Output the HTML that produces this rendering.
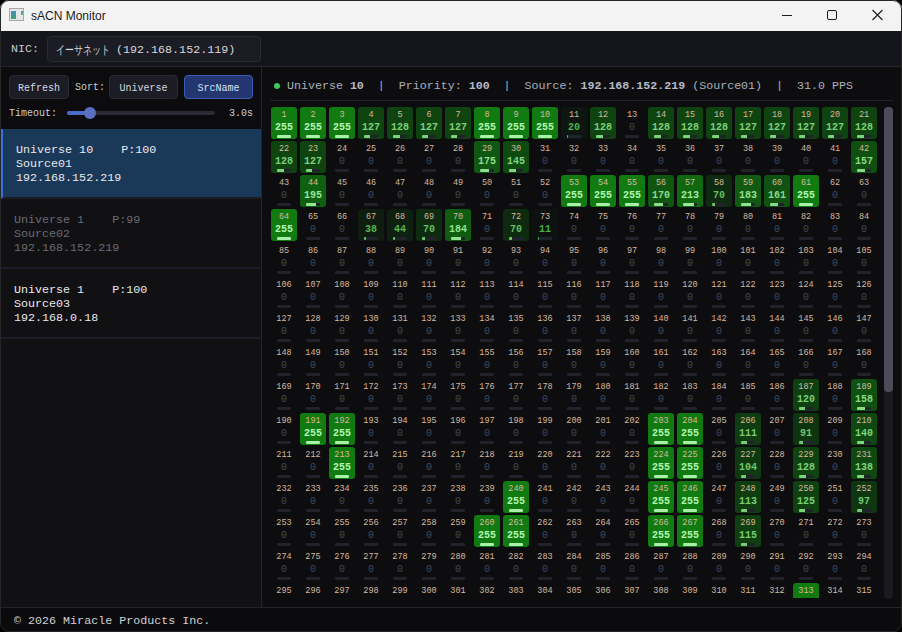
<!DOCTYPE html>
<html><head><meta charset="utf-8">
<style>
*{margin:0;padding:0;box-sizing:border-box}
html,body{width:902px;height:632px;overflow:hidden;background:#000}
body{font-family:"Liberation Mono",monospace;position:relative}
.win{position:absolute;left:0;top:0;width:902px;height:632px;border-radius:9px;overflow:hidden;background:#0d0d10}
.frame{position:absolute;left:0;top:0;width:902px;height:632px;border-radius:9px;border:1px solid #262626;pointer-events:none}
.title{position:absolute;left:0;top:0;width:902px;height:31px;background:#f3f3f3}
.title .t{position:absolute;left:31px;top:9px;font-family:"Liberation Sans",sans-serif;font-size:12px;color:#1a1a1a}
.ico{position:absolute;left:9px;top:8px;width:15px;height:13px;border:1px solid #a8a8a8;background:#e6e6e6}
.ico:before{content:"";position:absolute;left:1px;top:2px;width:5px;height:8px;background:linear-gradient(#4a8ac8,#3aa860)}
.ico:after{content:"";position:absolute;left:11px;top:2px;width:2px;height:4px;background:linear-gradient(#4a8ac8,#5ac070)}
.ctl{position:absolute;left:0;top:0}
.nic{position:absolute;left:0;top:31px;width:902px;height:35px;background:#15151c}
.nicb{position:absolute;left:0;top:66px;width:902px;height:1px;background:#25252e}
.nic .l{position:absolute;left:11px;top:11px;font-size:11.7px;color:#c8ccd8}
.nic .box{position:absolute;left:47px;top:5px;width:214px;height:26px;background:#1c1c24;border:1px solid #2a2a34;border-radius:4px;font-size:11.7px;color:#d8d8dc;white-space:nowrap}
.nic .box span{position:absolute;top:6px}
.jp{font-size:12px;transform:scaleX(0.75);transform-origin:0 0}
.left{position:absolute;left:1px;top:67px;width:261px;height:540px;background:#0c0c0f;border-right:1px solid #24242c}
.list{position:absolute;left:1px;top:129px;width:260px;height:478px;background:#111114}
.btn{position:absolute;height:24px;background:#1c1c24;border:1px solid #2a2a34;border-radius:4px;font-size:10px;color:#d8d8e0;text-align:center;line-height:25px}
.btn.on{background:#23366f;border-color:#3a5cb8;color:#d8e0f8}
.lbl{position:absolute;font-size:10px;color:#c8ccd4}
.track{position:absolute;left:67px;top:111px;width:148px;height:4px;border-radius:2px;background:#2a2a34}
.fill{position:absolute;left:67px;top:111px;width:24px;height:4px;border-radius:2px;background:#4a6cc8}
.thumb{position:absolute;left:84px;top:107px;width:12px;height:12px;border-radius:6px;background:#5a70c0}
.item{position:absolute;left:1px;width:260px;height:70px;border-bottom:2px solid #1c1c26;font-size:11.7px;line-height:14px;padding:14px 0 0 13px;color:#e8e8ea;white-space:pre}
.item.sel{background:#1a3858;border-left:2px solid #3a70e0;padding-left:13px}
.item.dim{color:#6a6a72}
.hdr{position:absolute;left:287px;top:79px;font-size:11.65px;color:#aab0bc;white-space:pre}
.hdr b{color:#b4bac6;font-weight:bold}
.dot{position:absolute;left:274px;top:83px;width:6px;height:6px;border-radius:3px;background:#3ccc5c}
.hline{position:absolute;left:270px;top:100px;width:623px;height:1px;background:#22222a}
.gridwrap{position:absolute;left:262px;top:101px;width:620px;height:497px;overflow:hidden}
.c{position:absolute;width:26px;height:32px;border-radius:3px;text-align:center}
.c i{position:absolute;left:0;top:3px;width:26px;font-style:normal;font-size:8.5px;line-height:10px;color:#d6b89c}
.c b{position:absolute;left:0;top:15px;width:26px;font-size:10px;line-height:12px;font-weight:bold;color:#c0f0c0}
.c b.z{font-weight:normal;color:#434859}
.c s{position:absolute;left:6px;top:28px;width:14px;height:3px;border-radius:1px;background:#22222c;overflow:hidden}
.c u{position:absolute;left:0;top:0;height:3px}
.sb{position:absolute;left:884px;top:107px;width:9px;height:492px;background:#1a1a20;border-radius:4px}
.sbt{position:absolute;left:884px;top:107px;width:9px;height:285px;background:#4c4c58;border-radius:4px}
.status{position:absolute;left:1px;top:607px;width:900px;height:25px;border-top:1px solid #24242c;background:#0b0b0d;font-size:11.7px;color:#d0d0d4;padding:6px 0 0 13px}
</style></head><body>
<div class="win">
 <div class="title">
  <div class="ico"></div>
  <div class="t">sACN Monitor</div>
  <svg class="ctl" width="902" height="31">
   <line x1="782" y1="15.5" x2="792" y2="15.5" stroke="#1a1a1a" stroke-width="1"/>
   <rect x="827.5" y="10.5" width="9" height="9" rx="1.5" fill="none" stroke="#1a1a1a" stroke-width="1"/>
   <path d="M872.5 10 L882.5 20 M882.5 10 L872.5 20" stroke="#1a1a1a" stroke-width="1.1"/>
  </svg>
 </div>
 <div class="nic"><div class="l">NIC:</div><div class="box"><span class="jp" style="left:8px;top:5px">イーサネット</span><span style="left:68px">(192.168.152.119)</span></div></div>
 <div class="nicb"></div>
 <div class="left"></div>
 <div class="list"></div>
 <div class="btn" style="left:9px;top:75px;width:60px">Refresh</div>
 <div class="lbl" style="left:75px;top:82px">Sort:</div>
 <div class="btn" style="left:109px;top:75px;width:69px">Universe</div>
 <div class="btn on" style="left:184px;top:75px;width:69px">SrcName</div>
 <div class="lbl" style="left:9px;top:108px">Timeout:</div>
 <div class="track"></div><div class="fill"></div><div class="thumb"></div>
 <div class="lbl" style="left:229px;top:108px">3.0s</div>
 <div class="item sel" style="top:129px">Universe 10    P:100
Source01
192.168.152.219</div>
 <div class="item dim" style="top:199px">Universe 1    P:99
Source02
192.168.152.219</div>
 <div class="item" style="top:269px">Universe 1    P:100
Source03
192.168.0.18</div>
 <div class="dot"></div>
 <div class="hdr">Universe <b>10</b>  |  Priority: <b>100</b>  |  Source: <b>192.168.152.219</b> (Source01)  |  31.0 PPS</div>
 <div class="hline"></div>
 <div class="gridwrap">
<div class="c" style="left:9px;top:6px;background:#117a11"><i>1</i><b style="color:#b2f6b2">255</b><s><u style="width:14px;background:#aaf0aa"></u></s></div>
<div class="c" style="left:38px;top:6px;background:#117a11"><i>2</i><b style="color:#b2f6b2">255</b><s><u style="width:14px;background:#aaf0aa"></u></s></div>
<div class="c" style="left:67px;top:6px;background:#117a11"><i>3</i><b style="color:#b2f6b2">255</b><s><u style="width:14px;background:#aaf0aa"></u></s></div>
<div class="c" style="left:96px;top:6px;background:#0f4310"><i>4</i><b style="color:#7cd07c">127</b><s><u style="width:6px;background:#7dd27d"></u></s></div>
<div class="c" style="left:125px;top:6px;background:#0f4411"><i>5</i><b style="color:#7cd07c">128</b><s><u style="width:7px;background:#7dd27d"></u></s></div>
<div class="c" style="left:154px;top:6px;background:#0f4310"><i>6</i><b style="color:#7cd07c">127</b><s><u style="width:6px;background:#7dd27d"></u></s></div>
<div class="c" style="left:183px;top:6px;background:#0f4310"><i>7</i><b style="color:#7cd07c">127</b><s><u style="width:6px;background:#7dd27d"></u></s></div>
<div class="c" style="left:212px;top:6px;background:#117a11"><i>8</i><b style="color:#b2f6b2">255</b><s><u style="width:14px;background:#aaf0aa"></u></s></div>
<div class="c" style="left:241px;top:6px;background:#117a11"><i>9</i><b style="color:#b2f6b2">255</b><s><u style="width:14px;background:#aaf0aa"></u></s></div>
<div class="c" style="left:270px;top:6px;background:#117a11"><i>10</i><b style="color:#b2f6b2">255</b><s><u style="width:14px;background:#aaf0aa"></u></s></div>
<div class="c" style="left:299px;top:6px;background:#0d1610"><i>11</i><b style="color:#4eb04e">20</b><s><u style="width:1px;background:#57b957"></u></s></div>
<div class="c" style="left:328px;top:6px;background:#0f4411"><i>12</i><b style="color:#7cd07c">128</b><s><u style="width:7px;background:#7dd27d"></u></s></div>
<div class="c" style="left:357px;top:6px"><i>13</i><b class="z">0</b><s></s></div>
<div class="c" style="left:386px;top:6px;background:#0f4411"><i>14</i><b style="color:#7cd07c">128</b><s><u style="width:7px;background:#7dd27d"></u></s></div>
<div class="c" style="left:415px;top:6px;background:#0f4411"><i>15</i><b style="color:#7cd07c">128</b><s><u style="width:7px;background:#7dd27d"></u></s></div>
<div class="c" style="left:444px;top:6px;background:#0f4411"><i>16</i><b style="color:#7cd07c">128</b><s><u style="width:7px;background:#7dd27d"></u></s></div>
<div class="c" style="left:473px;top:6px;background:#0f4310"><i>17</i><b style="color:#7cd07c">127</b><s><u style="width:6px;background:#7dd27d"></u></s></div>
<div class="c" style="left:502px;top:6px;background:#0f4310"><i>18</i><b style="color:#7cd07c">127</b><s><u style="width:6px;background:#7dd27d"></u></s></div>
<div class="c" style="left:531px;top:6px;background:#0f4310"><i>19</i><b style="color:#7cd07c">127</b><s><u style="width:6px;background:#7dd27d"></u></s></div>
<div class="c" style="left:560px;top:6px;background:#0f4310"><i>20</i><b style="color:#7cd07c">127</b><s><u style="width:6px;background:#7dd27d"></u></s></div>
<div class="c" style="left:589px;top:6px;background:#0f4411"><i>21</i><b style="color:#7cd07c">128</b><s><u style="width:7px;background:#7dd27d"></u></s></div>
<div class="c" style="left:9px;top:40px;background:#0f4411"><i>22</i><b style="color:#7cd07c">128</b><s><u style="width:7px;background:#7dd27d"></u></s></div>
<div class="c" style="left:38px;top:40px;background:#0f4310"><i>23</i><b style="color:#7cd07c">127</b><s><u style="width:6px;background:#7dd27d"></u></s></div>
<div class="c" style="left:67px;top:40px"><i>24</i><b class="z">0</b><s></s></div>
<div class="c" style="left:96px;top:40px"><i>25</i><b class="z">0</b><s></s></div>
<div class="c" style="left:125px;top:40px"><i>26</i><b class="z">0</b><s></s></div>
<div class="c" style="left:154px;top:40px"><i>27</i><b class="z">0</b><s></s></div>
<div class="c" style="left:183px;top:40px"><i>28</i><b class="z">0</b><s></s></div>
<div class="c" style="left:212px;top:40px;background:#105811"><i>29</i><b style="color:#90de90">175</b><s><u style="width:9px;background:#8edd8e"></u></s></div>
<div class="c" style="left:241px;top:40px;background:#0f4b11"><i>30</i><b style="color:#83d583">145</b><s><u style="width:7px;background:#83d683"></u></s></div>
<div class="c" style="left:270px;top:40px"><i>31</i><b class="z">0</b><s></s></div>
<div class="c" style="left:299px;top:40px"><i>32</i><b class="z">0</b><s></s></div>
<div class="c" style="left:328px;top:40px"><i>33</i><b class="z">0</b><s></s></div>
<div class="c" style="left:357px;top:40px"><i>34</i><b class="z">0</b><s></s></div>
<div class="c" style="left:386px;top:40px"><i>35</i><b class="z">0</b><s></s></div>
<div class="c" style="left:415px;top:40px"><i>36</i><b class="z">0</b><s></s></div>
<div class="c" style="left:444px;top:40px"><i>37</i><b class="z">0</b><s></s></div>
<div class="c" style="left:473px;top:40px"><i>38</i><b class="z">0</b><s></s></div>
<div class="c" style="left:502px;top:40px"><i>39</i><b class="z">0</b><s></s></div>
<div class="c" style="left:531px;top:40px"><i>40</i><b class="z">0</b><s></s></div>
<div class="c" style="left:560px;top:40px"><i>41</i><b class="z">0</b><s></s></div>
<div class="c" style="left:589px;top:40px;background:#0f5011"><i>42</i><b style="color:#88d988">157</b><s><u style="width:8px;background:#87d987"></u></s></div>
<div class="c" style="left:9px;top:74px"><i>43</i><b class="z">0</b><s></s></div>
<div class="c" style="left:38px;top:74px;background:#106011"><i>44</i><b style="color:#99e499">195</b><s><u style="width:10px;background:#95e295"></u></s></div>
<div class="c" style="left:67px;top:74px"><i>45</i><b class="z">0</b><s></s></div>
<div class="c" style="left:96px;top:74px"><i>46</i><b class="z">0</b><s></s></div>
<div class="c" style="left:125px;top:74px"><i>47</i><b class="z">0</b><s></s></div>
<div class="c" style="left:154px;top:74px"><i>48</i><b class="z">0</b><s></s></div>
<div class="c" style="left:183px;top:74px"><i>49</i><b class="z">0</b><s></s></div>
<div class="c" style="left:212px;top:74px"><i>50</i><b class="z">0</b><s></s></div>
<div class="c" style="left:241px;top:74px"><i>51</i><b class="z">0</b><s></s></div>
<div class="c" style="left:270px;top:74px"><i>52</i><b class="z">0</b><s></s></div>
<div class="c" style="left:299px;top:74px;background:#117a11"><i>53</i><b style="color:#b2f6b2">255</b><s><u style="width:14px;background:#aaf0aa"></u></s></div>
<div class="c" style="left:328px;top:74px;background:#117a11"><i>54</i><b style="color:#b2f6b2">255</b><s><u style="width:14px;background:#aaf0aa"></u></s></div>
<div class="c" style="left:357px;top:74px;background:#117a11"><i>55</i><b style="color:#b2f6b2">255</b><s><u style="width:14px;background:#aaf0aa"></u></s></div>
<div class="c" style="left:386px;top:74px;background:#105611"><i>56</i><b style="color:#8edd8e">170</b><s><u style="width:9px;background:#8cdc8c"></u></s></div>
<div class="c" style="left:415px;top:74px;background:#106811"><i>57</i><b style="color:#a0e9a0">213</b><s><u style="width:11px;background:#9be69b"></u></s></div>
<div class="c" style="left:444px;top:74px;background:#0e2b10"><i>58</i><b style="color:#64bf64">70</b><s><u style="width:3px;background:#69c469"></u></s></div>
<div class="c" style="left:473px;top:74px;background:#105b11"><i>59</i><b style="color:#94e194">183</b><s><u style="width:10px;background:#91df91"></u></s></div>
<div class="c" style="left:502px;top:74px;background:#105211"><i>60</i><b style="color:#8ada8a">161</b><s><u style="width:8px;background:#89da89"></u></s></div>
<div class="c" style="left:531px;top:74px;background:#117a11"><i>61</i><b style="color:#b2f6b2">255</b><s><u style="width:14px;background:#aaf0aa"></u></s></div>
<div class="c" style="left:560px;top:74px"><i>62</i><b class="z">0</b><s></s></div>
<div class="c" style="left:589px;top:74px"><i>63</i><b class="z">0</b><s></s></div>
<div class="c" style="left:9px;top:108px;background:#117a11"><i>64</i><b style="color:#b2f6b2">255</b><s><u style="width:14px;background:#aaf0aa"></u></s></div>
<div class="c" style="left:38px;top:108px"><i>65</i><b class="z">0</b><s></s></div>
<div class="c" style="left:67px;top:108px"><i>66</i><b class="z">0</b><s></s></div>
<div class="c" style="left:96px;top:108px;background:#0e1d10"><i>67</i><b style="color:#56b556">38</b><s><u style="width:2px;background:#5dbd5d"></u></s></div>
<div class="c" style="left:125px;top:108px;background:#0e2010"><i>68</i><b style="color:#59b759">44</b><s><u style="width:2px;background:#60be60"></u></s></div>
<div class="c" style="left:154px;top:108px;background:#0e2b10"><i>69</i><b style="color:#64bf64">70</b><s><u style="width:3px;background:#69c469"></u></s></div>
<div class="c" style="left:183px;top:108px;background:#105c11"><i>70</i><b style="color:#94e194">184</b><s><u style="width:10px;background:#91df91"></u></s></div>
<div class="c" style="left:212px;top:108px"><i>71</i><b class="z">0</b><s></s></div>
<div class="c" style="left:241px;top:108px;background:#0e2b10"><i>72</i><b style="color:#64bf64">70</b><s><u style="width:3px;background:#69c469"></u></s></div>
<div class="c" style="left:270px;top:108px;background:#0d1210"><i>73</i><b style="color:#4bad4b">11</b><s><u style="width:1px;background:#54b754"></u></s></div>
<div class="c" style="left:299px;top:108px"><i>74</i><b class="z">0</b><s></s></div>
<div class="c" style="left:328px;top:108px"><i>75</i><b class="z">0</b><s></s></div>
<div class="c" style="left:357px;top:108px"><i>76</i><b class="z">0</b><s></s></div>
<div class="c" style="left:386px;top:108px"><i>77</i><b class="z">0</b><s></s></div>
<div class="c" style="left:415px;top:108px"><i>78</i><b class="z">0</b><s></s></div>
<div class="c" style="left:444px;top:108px"><i>79</i><b class="z">0</b><s></s></div>
<div class="c" style="left:473px;top:108px"><i>80</i><b class="z">0</b><s></s></div>
<div class="c" style="left:502px;top:108px"><i>81</i><b class="z">0</b><s></s></div>
<div class="c" style="left:531px;top:108px"><i>82</i><b class="z">0</b><s></s></div>
<div class="c" style="left:560px;top:108px"><i>83</i><b class="z">0</b><s></s></div>
<div class="c" style="left:589px;top:108px"><i>84</i><b class="z">0</b><s></s></div>
<div class="c" style="left:9px;top:142px"><i>85</i><b class="z">0</b><s></s></div>
<div class="c" style="left:38px;top:142px"><i>86</i><b class="z">0</b><s></s></div>
<div class="c" style="left:67px;top:142px"><i>87</i><b class="z">0</b><s></s></div>
<div class="c" style="left:96px;top:142px"><i>88</i><b class="z">0</b><s></s></div>
<div class="c" style="left:125px;top:142px"><i>89</i><b class="z">0</b><s></s></div>
<div class="c" style="left:154px;top:142px"><i>90</i><b class="z">0</b><s></s></div>
<div class="c" style="left:183px;top:142px"><i>91</i><b class="z">0</b><s></s></div>
<div class="c" style="left:212px;top:142px"><i>92</i><b class="z">0</b><s></s></div>
<div class="c" style="left:241px;top:142px"><i>93</i><b class="z">0</b><s></s></div>
<div class="c" style="left:270px;top:142px"><i>94</i><b class="z">0</b><s></s></div>
<div class="c" style="left:299px;top:142px"><i>95</i><b class="z">0</b><s></s></div>
<div class="c" style="left:328px;top:142px"><i>96</i><b class="z">0</b><s></s></div>
<div class="c" style="left:357px;top:142px"><i>97</i><b class="z">0</b><s></s></div>
<div class="c" style="left:386px;top:142px"><i>98</i><b class="z">0</b><s></s></div>
<div class="c" style="left:415px;top:142px"><i>99</i><b class="z">0</b><s></s></div>
<div class="c" style="left:444px;top:142px"><i>100</i><b class="z">0</b><s></s></div>
<div class="c" style="left:473px;top:142px"><i>101</i><b class="z">0</b><s></s></div>
<div class="c" style="left:502px;top:142px"><i>102</i><b class="z">0</b><s></s></div>
<div class="c" style="left:531px;top:142px"><i>103</i><b class="z">0</b><s></s></div>
<div class="c" style="left:560px;top:142px"><i>104</i><b class="z">0</b><s></s></div>
<div class="c" style="left:589px;top:142px"><i>105</i><b class="z">0</b><s></s></div>
<div class="c" style="left:9px;top:176px"><i>106</i><b class="z">0</b><s></s></div>
<div class="c" style="left:38px;top:176px"><i>107</i><b class="z">0</b><s></s></div>
<div class="c" style="left:67px;top:176px"><i>108</i><b class="z">0</b><s></s></div>
<div class="c" style="left:96px;top:176px"><i>109</i><b class="z">0</b><s></s></div>
<div class="c" style="left:125px;top:176px"><i>110</i><b class="z">0</b><s></s></div>
<div class="c" style="left:154px;top:176px"><i>111</i><b class="z">0</b><s></s></div>
<div class="c" style="left:183px;top:176px"><i>112</i><b class="z">0</b><s></s></div>
<div class="c" style="left:212px;top:176px"><i>113</i><b class="z">0</b><s></s></div>
<div class="c" style="left:241px;top:176px"><i>114</i><b class="z">0</b><s></s></div>
<div class="c" style="left:270px;top:176px"><i>115</i><b class="z">0</b><s></s></div>
<div class="c" style="left:299px;top:176px"><i>116</i><b class="z">0</b><s></s></div>
<div class="c" style="left:328px;top:176px"><i>117</i><b class="z">0</b><s></s></div>
<div class="c" style="left:357px;top:176px"><i>118</i><b class="z">0</b><s></s></div>
<div class="c" style="left:386px;top:176px"><i>119</i><b class="z">0</b><s></s></div>
<div class="c" style="left:415px;top:176px"><i>120</i><b class="z">0</b><s></s></div>
<div class="c" style="left:444px;top:176px"><i>121</i><b class="z">0</b><s></s></div>
<div class="c" style="left:473px;top:176px"><i>122</i><b class="z">0</b><s></s></div>
<div class="c" style="left:502px;top:176px"><i>123</i><b class="z">0</b><s></s></div>
<div class="c" style="left:531px;top:176px"><i>124</i><b class="z">0</b><s></s></div>
<div class="c" style="left:560px;top:176px"><i>125</i><b class="z">0</b><s></s></div>
<div class="c" style="left:589px;top:176px"><i>126</i><b class="z">0</b><s></s></div>
<div class="c" style="left:9px;top:210px"><i>127</i><b class="z">0</b><s></s></div>
<div class="c" style="left:38px;top:210px"><i>128</i><b class="z">0</b><s></s></div>
<div class="c" style="left:67px;top:210px"><i>129</i><b class="z">0</b><s></s></div>
<div class="c" style="left:96px;top:210px"><i>130</i><b class="z">0</b><s></s></div>
<div class="c" style="left:125px;top:210px"><i>131</i><b class="z">0</b><s></s></div>
<div class="c" style="left:154px;top:210px"><i>132</i><b class="z">0</b><s></s></div>
<div class="c" style="left:183px;top:210px"><i>133</i><b class="z">0</b><s></s></div>
<div class="c" style="left:212px;top:210px"><i>134</i><b class="z">0</b><s></s></div>
<div class="c" style="left:241px;top:210px"><i>135</i><b class="z">0</b><s></s></div>
<div class="c" style="left:270px;top:210px"><i>136</i><b class="z">0</b><s></s></div>
<div class="c" style="left:299px;top:210px"><i>137</i><b class="z">0</b><s></s></div>
<div class="c" style="left:328px;top:210px"><i>138</i><b class="z">0</b><s></s></div>
<div class="c" style="left:357px;top:210px"><i>139</i><b class="z">0</b><s></s></div>
<div class="c" style="left:386px;top:210px"><i>140</i><b class="z">0</b><s></s></div>
<div class="c" style="left:415px;top:210px"><i>141</i><b class="z">0</b><s></s></div>
<div class="c" style="left:444px;top:210px"><i>142</i><b class="z">0</b><s></s></div>
<div class="c" style="left:473px;top:210px"><i>143</i><b class="z">0</b><s></s></div>
<div class="c" style="left:502px;top:210px"><i>144</i><b class="z">0</b><s></s></div>
<div class="c" style="left:531px;top:210px"><i>145</i><b class="z">0</b><s></s></div>
<div class="c" style="left:560px;top:210px"><i>146</i><b class="z">0</b><s></s></div>
<div class="c" style="left:589px;top:210px"><i>147</i><b class="z">0</b><s></s></div>
<div class="c" style="left:9px;top:244px"><i>148</i><b class="z">0</b><s></s></div>
<div class="c" style="left:38px;top:244px"><i>149</i><b class="z">0</b><s></s></div>
<div class="c" style="left:67px;top:244px"><i>150</i><b class="z">0</b><s></s></div>
<div class="c" style="left:96px;top:244px"><i>151</i><b class="z">0</b><s></s></div>
<div class="c" style="left:125px;top:244px"><i>152</i><b class="z">0</b><s></s></div>
<div class="c" style="left:154px;top:244px"><i>153</i><b class="z">0</b><s></s></div>
<div class="c" style="left:183px;top:244px"><i>154</i><b class="z">0</b><s></s></div>
<div class="c" style="left:212px;top:244px"><i>155</i><b class="z">0</b><s></s></div>
<div class="c" style="left:241px;top:244px"><i>156</i><b class="z">0</b><s></s></div>
<div class="c" style="left:270px;top:244px"><i>157</i><b class="z">0</b><s></s></div>
<div class="c" style="left:299px;top:244px"><i>158</i><b class="z">0</b><s></s></div>
<div class="c" style="left:328px;top:244px"><i>159</i><b class="z">0</b><s></s></div>
<div class="c" style="left:357px;top:244px"><i>160</i><b class="z">0</b><s></s></div>
<div class="c" style="left:386px;top:244px"><i>161</i><b class="z">0</b><s></s></div>
<div class="c" style="left:415px;top:244px"><i>162</i><b class="z">0</b><s></s></div>
<div class="c" style="left:444px;top:244px"><i>163</i><b class="z">0</b><s></s></div>
<div class="c" style="left:473px;top:244px"><i>164</i><b class="z">0</b><s></s></div>
<div class="c" style="left:502px;top:244px"><i>165</i><b class="z">0</b><s></s></div>
<div class="c" style="left:531px;top:244px"><i>166</i><b class="z">0</b><s></s></div>
<div class="c" style="left:560px;top:244px"><i>167</i><b class="z">0</b><s></s></div>
<div class="c" style="left:589px;top:244px"><i>168</i><b class="z">0</b><s></s></div>
<div class="c" style="left:9px;top:278px"><i>169</i><b class="z">0</b><s></s></div>
<div class="c" style="left:38px;top:278px"><i>170</i><b class="z">0</b><s></s></div>
<div class="c" style="left:67px;top:278px"><i>171</i><b class="z">0</b><s></s></div>
<div class="c" style="left:96px;top:278px"><i>172</i><b class="z">0</b><s></s></div>
<div class="c" style="left:125px;top:278px"><i>173</i><b class="z">0</b><s></s></div>
<div class="c" style="left:154px;top:278px"><i>174</i><b class="z">0</b><s></s></div>
<div class="c" style="left:183px;top:278px"><i>175</i><b class="z">0</b><s></s></div>
<div class="c" style="left:212px;top:278px"><i>176</i><b class="z">0</b><s></s></div>
<div class="c" style="left:241px;top:278px"><i>177</i><b class="z">0</b><s></s></div>
<div class="c" style="left:270px;top:278px"><i>178</i><b class="z">0</b><s></s></div>
<div class="c" style="left:299px;top:278px"><i>179</i><b class="z">0</b><s></s></div>
<div class="c" style="left:328px;top:278px"><i>180</i><b class="z">0</b><s></s></div>
<div class="c" style="left:357px;top:278px"><i>181</i><b class="z">0</b><s></s></div>
<div class="c" style="left:386px;top:278px"><i>182</i><b class="z">0</b><s></s></div>
<div class="c" style="left:415px;top:278px"><i>183</i><b class="z">0</b><s></s></div>
<div class="c" style="left:444px;top:278px"><i>184</i><b class="z">0</b><s></s></div>
<div class="c" style="left:473px;top:278px"><i>185</i><b class="z">0</b><s></s></div>
<div class="c" style="left:502px;top:278px"><i>186</i><b class="z">0</b><s></s></div>
<div class="c" style="left:531px;top:278px;background:#0f4010"><i>187</i><b style="color:#79ce79">120</b><s><u style="width:6px;background:#7ad07a"></u></s></div>
<div class="c" style="left:560px;top:278px"><i>188</i><b class="z">0</b><s></s></div>
<div class="c" style="left:589px;top:278px;background:#0f5111"><i>189</i><b style="color:#89d989">158</b><s><u style="width:8px;background:#88d988"></u></s></div>
<div class="c" style="left:9px;top:312px"><i>190</i><b class="z">0</b><s></s></div>
<div class="c" style="left:38px;top:312px;background:#117a11"><i>191</i><b style="color:#b2f6b2">255</b><s><u style="width:14px;background:#aaf0aa"></u></s></div>
<div class="c" style="left:67px;top:312px;background:#117a11"><i>192</i><b style="color:#b2f6b2">255</b><s><u style="width:14px;background:#aaf0aa"></u></s></div>
<div class="c" style="left:96px;top:312px"><i>193</i><b class="z">0</b><s></s></div>
<div class="c" style="left:125px;top:312px"><i>194</i><b class="z">0</b><s></s></div>
<div class="c" style="left:154px;top:312px"><i>195</i><b class="z">0</b><s></s></div>
<div class="c" style="left:183px;top:312px"><i>196</i><b class="z">0</b><s></s></div>
<div class="c" style="left:212px;top:312px"><i>197</i><b class="z">0</b><s></s></div>
<div class="c" style="left:241px;top:312px"><i>198</i><b class="z">0</b><s></s></div>
<div class="c" style="left:270px;top:312px"><i>199</i><b class="z">0</b><s></s></div>
<div class="c" style="left:299px;top:312px"><i>200</i><b class="z">0</b><s></s></div>
<div class="c" style="left:328px;top:312px"><i>201</i><b class="z">0</b><s></s></div>
<div class="c" style="left:357px;top:312px"><i>202</i><b class="z">0</b><s></s></div>
<div class="c" style="left:386px;top:312px;background:#117a11"><i>203</i><b style="color:#b2f6b2">255</b><s><u style="width:14px;background:#aaf0aa"></u></s></div>
<div class="c" style="left:415px;top:312px;background:#117a11"><i>204</i><b style="color:#b2f6b2">255</b><s><u style="width:14px;background:#aaf0aa"></u></s></div>
<div class="c" style="left:444px;top:312px"><i>205</i><b class="z">0</b><s></s></div>
<div class="c" style="left:473px;top:312px;background:#0f3c10"><i>206</i><b style="color:#75cb75">111</b><s><u style="width:6px;background:#77ce77"></u></s></div>
<div class="c" style="left:502px;top:312px"><i>207</i><b class="z">0</b><s></s></div>
<div class="c" style="left:531px;top:312px;background:#0e3410"><i>208</i><b style="color:#6dc56d">91</b><s><u style="width:4px;background:#70c970"></u></s></div>
<div class="c" style="left:560px;top:312px"><i>209</i><b class="z">0</b><s></s></div>
<div class="c" style="left:589px;top:312px;background:#0f4911"><i>210</i><b style="color:#81d481">140</b><s><u style="width:7px;background:#81d581"></u></s></div>
<div class="c" style="left:9px;top:346px"><i>211</i><b class="z">0</b><s></s></div>
<div class="c" style="left:38px;top:346px"><i>212</i><b class="z">0</b><s></s></div>
<div class="c" style="left:67px;top:346px;background:#117a11"><i>213</i><b style="color:#b2f6b2">255</b><s><u style="width:14px;background:#aaf0aa"></u></s></div>
<div class="c" style="left:96px;top:346px"><i>214</i><b class="z">0</b><s></s></div>
<div class="c" style="left:125px;top:346px"><i>215</i><b class="z">0</b><s></s></div>
<div class="c" style="left:154px;top:346px"><i>216</i><b class="z">0</b><s></s></div>
<div class="c" style="left:183px;top:346px"><i>217</i><b class="z">0</b><s></s></div>
<div class="c" style="left:212px;top:346px"><i>218</i><b class="z">0</b><s></s></div>
<div class="c" style="left:241px;top:346px"><i>219</i><b class="z">0</b><s></s></div>
<div class="c" style="left:270px;top:346px"><i>220</i><b class="z">0</b><s></s></div>
<div class="c" style="left:299px;top:346px"><i>221</i><b class="z">0</b><s></s></div>
<div class="c" style="left:328px;top:346px"><i>222</i><b class="z">0</b><s></s></div>
<div class="c" style="left:357px;top:346px"><i>223</i><b class="z">0</b><s></s></div>
<div class="c" style="left:386px;top:346px;background:#117a11"><i>224</i><b style="color:#b2f6b2">255</b><s><u style="width:14px;background:#aaf0aa"></u></s></div>
<div class="c" style="left:415px;top:346px;background:#117a11"><i>225</i><b style="color:#b2f6b2">255</b><s><u style="width:14px;background:#aaf0aa"></u></s></div>
<div class="c" style="left:444px;top:346px"><i>226</i><b class="z">0</b><s></s></div>
<div class="c" style="left:473px;top:346px;background:#0f3910"><i>227</i><b style="color:#72c972">104</b><s><u style="width:5px;background:#75cc75"></u></s></div>
<div class="c" style="left:502px;top:346px"><i>228</i><b class="z">0</b><s></s></div>
<div class="c" style="left:531px;top:346px;background:#0f4411"><i>229</i><b style="color:#7cd07c">128</b><s><u style="width:7px;background:#7dd27d"></u></s></div>
<div class="c" style="left:560px;top:346px"><i>230</i><b class="z">0</b><s></s></div>
<div class="c" style="left:589px;top:346px;background:#0f4811"><i>231</i><b style="color:#80d380">138</b><s><u style="width:7px;background:#81d481"></u></s></div>
<div class="c" style="left:9px;top:380px"><i>232</i><b class="z">0</b><s></s></div>
<div class="c" style="left:38px;top:380px"><i>233</i><b class="z">0</b><s></s></div>
<div class="c" style="left:67px;top:380px"><i>234</i><b class="z">0</b><s></s></div>
<div class="c" style="left:96px;top:380px"><i>235</i><b class="z">0</b><s></s></div>
<div class="c" style="left:125px;top:380px"><i>236</i><b class="z">0</b><s></s></div>
<div class="c" style="left:154px;top:380px"><i>237</i><b class="z">0</b><s></s></div>
<div class="c" style="left:183px;top:380px"><i>238</i><b class="z">0</b><s></s></div>
<div class="c" style="left:212px;top:380px"><i>239</i><b class="z">0</b><s></s></div>
<div class="c" style="left:241px;top:380px;background:#117a11"><i>240</i><b style="color:#b2f6b2">255</b><s><u style="width:14px;background:#aaf0aa"></u></s></div>
<div class="c" style="left:270px;top:380px"><i>241</i><b class="z">0</b><s></s></div>
<div class="c" style="left:299px;top:380px"><i>242</i><b class="z">0</b><s></s></div>
<div class="c" style="left:328px;top:380px"><i>243</i><b class="z">0</b><s></s></div>
<div class="c" style="left:357px;top:380px"><i>244</i><b class="z">0</b><s></s></div>
<div class="c" style="left:386px;top:380px;background:#117a11"><i>245</i><b style="color:#b2f6b2">255</b><s><u style="width:14px;background:#aaf0aa"></u></s></div>
<div class="c" style="left:415px;top:380px;background:#117a11"><i>246</i><b style="color:#b2f6b2">255</b><s><u style="width:14px;background:#aaf0aa"></u></s></div>
<div class="c" style="left:444px;top:380px"><i>247</i><b class="z">0</b><s></s></div>
<div class="c" style="left:473px;top:380px;background:#0f3d10"><i>248</i><b style="color:#76cc76">113</b><s><u style="width:6px;background:#78cf78"></u></s></div>
<div class="c" style="left:502px;top:380px"><i>249</i><b class="z">0</b><s></s></div>
<div class="c" style="left:531px;top:380px;background:#0f4210"><i>250</i><b style="color:#7bcf7b">125</b><s><u style="width:6px;background:#7cd17c"></u></s></div>
<div class="c" style="left:560px;top:380px"><i>251</i><b class="z">0</b><s></s></div>
<div class="c" style="left:589px;top:380px;background:#0f3610"><i>252</i><b style="color:#6fc76f">97</b><s><u style="width:5px;background:#72cb72"></u></s></div>
<div class="c" style="left:9px;top:414px"><i>253</i><b class="z">0</b><s></s></div>
<div class="c" style="left:38px;top:414px"><i>254</i><b class="z">0</b><s></s></div>
<div class="c" style="left:67px;top:414px"><i>255</i><b class="z">0</b><s></s></div>
<div class="c" style="left:96px;top:414px"><i>256</i><b class="z">0</b><s></s></div>
<div class="c" style="left:125px;top:414px"><i>257</i><b class="z">0</b><s></s></div>
<div class="c" style="left:154px;top:414px"><i>258</i><b class="z">0</b><s></s></div>
<div class="c" style="left:183px;top:414px"><i>259</i><b class="z">0</b><s></s></div>
<div class="c" style="left:212px;top:414px;background:#117a11"><i>260</i><b style="color:#b2f6b2">255</b><s><u style="width:14px;background:#aaf0aa"></u></s></div>
<div class="c" style="left:241px;top:414px;background:#117a11"><i>261</i><b style="color:#b2f6b2">255</b><s><u style="width:14px;background:#aaf0aa"></u></s></div>
<div class="c" style="left:270px;top:414px"><i>262</i><b class="z">0</b><s></s></div>
<div class="c" style="left:299px;top:414px"><i>263</i><b class="z">0</b><s></s></div>
<div class="c" style="left:328px;top:414px"><i>264</i><b class="z">0</b><s></s></div>
<div class="c" style="left:357px;top:414px"><i>265</i><b class="z">0</b><s></s></div>
<div class="c" style="left:386px;top:414px;background:#117a11"><i>266</i><b style="color:#b2f6b2">255</b><s><u style="width:14px;background:#aaf0aa"></u></s></div>
<div class="c" style="left:415px;top:414px;background:#117a11"><i>267</i><b style="color:#b2f6b2">255</b><s><u style="width:14px;background:#aaf0aa"></u></s></div>
<div class="c" style="left:444px;top:414px"><i>268</i><b class="z">0</b><s></s></div>
<div class="c" style="left:473px;top:414px;background:#0f3e10"><i>269</i><b style="color:#77cc77">115</b><s><u style="width:6px;background:#79cf79"></u></s></div>
<div class="c" style="left:502px;top:414px"><i>270</i><b class="z">0</b><s></s></div>
<div class="c" style="left:531px;top:414px"><i>271</i><b class="z">0</b><s></s></div>
<div class="c" style="left:560px;top:414px"><i>272</i><b class="z">0</b><s></s></div>
<div class="c" style="left:589px;top:414px"><i>273</i><b class="z">0</b><s></s></div>
<div class="c" style="left:9px;top:448px"><i>274</i><b class="z">0</b><s></s></div>
<div class="c" style="left:38px;top:448px"><i>275</i><b class="z">0</b><s></s></div>
<div class="c" style="left:67px;top:448px"><i>276</i><b class="z">0</b><s></s></div>
<div class="c" style="left:96px;top:448px"><i>277</i><b class="z">0</b><s></s></div>
<div class="c" style="left:125px;top:448px"><i>278</i><b class="z">0</b><s></s></div>
<div class="c" style="left:154px;top:448px"><i>279</i><b class="z">0</b><s></s></div>
<div class="c" style="left:183px;top:448px"><i>280</i><b class="z">0</b><s></s></div>
<div class="c" style="left:212px;top:448px"><i>281</i><b class="z">0</b><s></s></div>
<div class="c" style="left:241px;top:448px"><i>282</i><b class="z">0</b><s></s></div>
<div class="c" style="left:270px;top:448px"><i>283</i><b class="z">0</b><s></s></div>
<div class="c" style="left:299px;top:448px"><i>284</i><b class="z">0</b><s></s></div>
<div class="c" style="left:328px;top:448px"><i>285</i><b class="z">0</b><s></s></div>
<div class="c" style="left:357px;top:448px"><i>286</i><b class="z">0</b><s></s></div>
<div class="c" style="left:386px;top:448px"><i>287</i><b class="z">0</b><s></s></div>
<div class="c" style="left:415px;top:448px"><i>288</i><b class="z">0</b><s></s></div>
<div class="c" style="left:444px;top:448px"><i>289</i><b class="z">0</b><s></s></div>
<div class="c" style="left:473px;top:448px"><i>290</i><b class="z">0</b><s></s></div>
<div class="c" style="left:502px;top:448px"><i>291</i><b class="z">0</b><s></s></div>
<div class="c" style="left:531px;top:448px"><i>292</i><b class="z">0</b><s></s></div>
<div class="c" style="left:560px;top:448px"><i>293</i><b class="z">0</b><s></s></div>
<div class="c" style="left:589px;top:448px"><i>294</i><b class="z">0</b><s></s></div>
<div class="c" style="left:9px;top:482px"><i>295</i><b class="z">0</b><s></s></div>
<div class="c" style="left:38px;top:482px"><i>296</i><b class="z">0</b><s></s></div>
<div class="c" style="left:67px;top:482px"><i>297</i><b class="z">0</b><s></s></div>
<div class="c" style="left:96px;top:482px"><i>298</i><b class="z">0</b><s></s></div>
<div class="c" style="left:125px;top:482px"><i>299</i><b class="z">0</b><s></s></div>
<div class="c" style="left:154px;top:482px"><i>300</i><b class="z">0</b><s></s></div>
<div class="c" style="left:183px;top:482px"><i>301</i><b class="z">0</b><s></s></div>
<div class="c" style="left:212px;top:482px"><i>302</i><b class="z">0</b><s></s></div>
<div class="c" style="left:241px;top:482px"><i>303</i><b class="z">0</b><s></s></div>
<div class="c" style="left:270px;top:482px"><i>304</i><b class="z">0</b><s></s></div>
<div class="c" style="left:299px;top:482px"><i>305</i><b class="z">0</b><s></s></div>
<div class="c" style="left:328px;top:482px"><i>306</i><b class="z">0</b><s></s></div>
<div class="c" style="left:357px;top:482px"><i>307</i><b class="z">0</b><s></s></div>
<div class="c" style="left:386px;top:482px"><i>308</i><b class="z">0</b><s></s></div>
<div class="c" style="left:415px;top:482px"><i>309</i><b class="z">0</b><s></s></div>
<div class="c" style="left:444px;top:482px"><i>310</i><b class="z">0</b><s></s></div>
<div class="c" style="left:473px;top:482px"><i>311</i><b class="z">0</b><s></s></div>
<div class="c" style="left:502px;top:482px"><i>312</i><b class="z">0</b><s></s></div>
<div class="c" style="left:531px;top:482px;background:#117a11"><i>313</i><b style="color:#b2f6b2">255</b><s><u style="width:14px;background:#aaf0aa"></u></s></div>
<div class="c" style="left:560px;top:482px"><i>314</i><b class="z">0</b><s></s></div>
<div class="c" style="left:589px;top:482px"><i>315</i><b class="z">0</b><s></s></div>
 </div>
 <div class="sb"></div><div class="sbt"></div>
 <div class="status">© 2026 Miracle Products Inc.</div>
</div>
<div class="frame"></div>
</body></html>
